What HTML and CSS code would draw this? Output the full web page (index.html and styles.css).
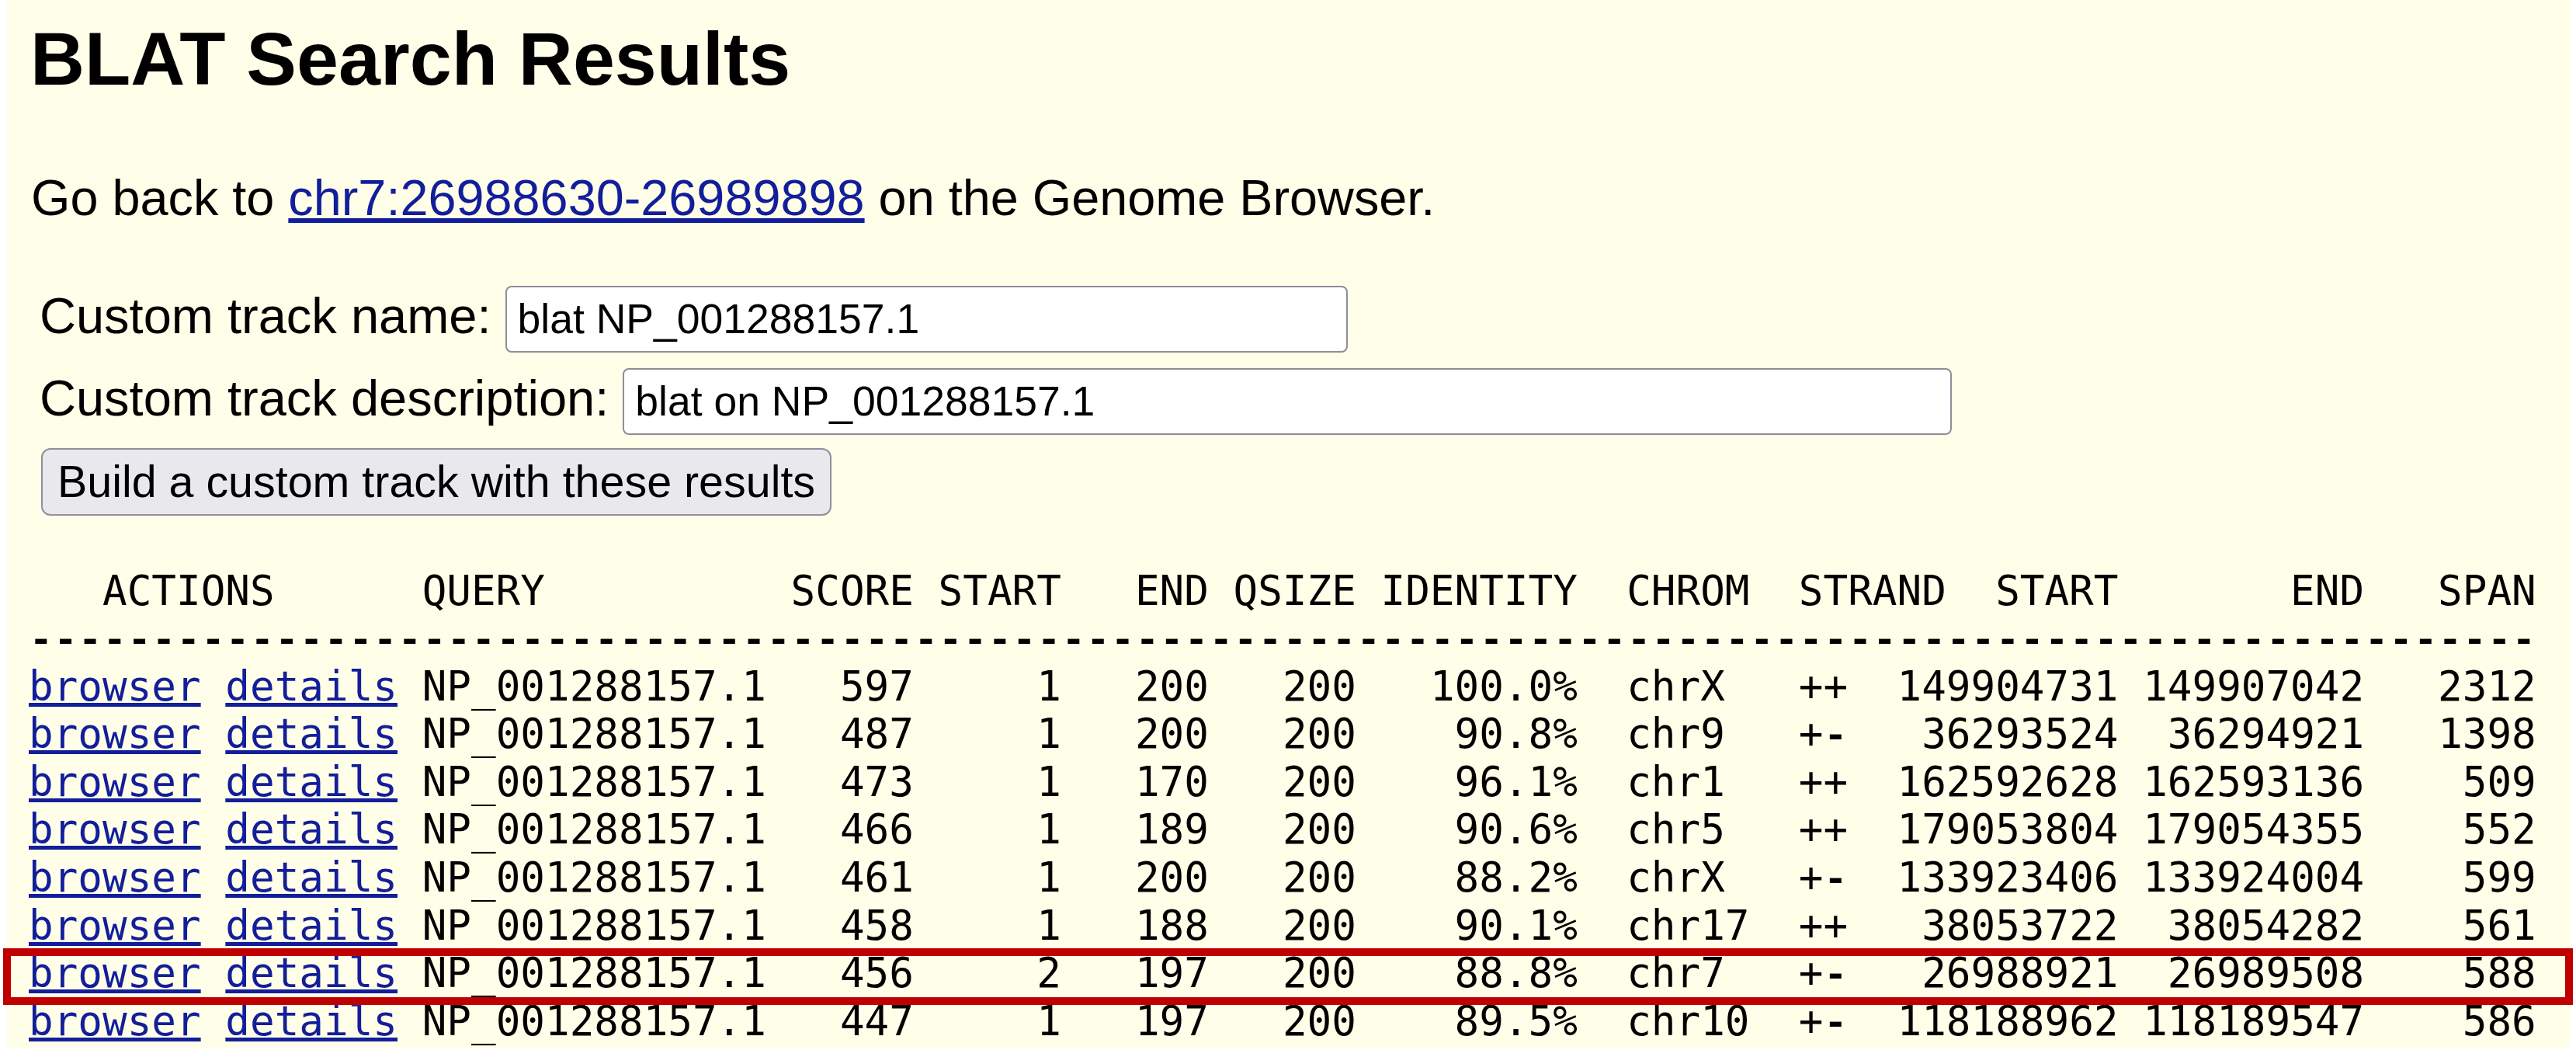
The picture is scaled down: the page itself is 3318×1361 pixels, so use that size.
FILE: index.html
```html
<!DOCTYPE html>
<html lang="en">
<head>
<meta charset="utf-8">
<title>BLAT Search Results</title>
<link rel="stylesheet" href="styles.css">
</head>
<body>
<div class="page">
  <h1 class="title">BLAT Search Results</h1>
  <p class="back">Go back to <a href="#">chr7:26988630-26989898</a> on the Genome Browser.</p>
  <form class="form">
    <div class="row">
      <label class="label">Custom track name:</label>
      <input class="field field-name" type="text" value="blat NP_001288157.1">
    </div>
    <div class="row row-desc">
      <label class="label">Custom track description:</label>
      <input class="field field-desc" type="text" value="blat on NP_001288157.1">
    </div>
    <button class="build" type="button">Build a custom track with these results</button>
  </form>
<pre class="results">   ACTIONS      QUERY          SCORE START   END QSIZE IDENTITY  CHROM  STRAND  START       END   SPAN
<span class="dash">------------------------------------------------------------------------------------------------------</span>
<a href="#">browser</a> <a href="#">details</a> NP_001288157.1   597     1   200   200   100.0%  chrX   ++  149904731 149907042   2312
<a href="#">browser</a> <a href="#">details</a> NP_001288157.1   487     1   200   200    90.8%  chr9   +<span class="dash">-</span>   36293524  36294921   1398
<a href="#">browser</a> <a href="#">details</a> NP_001288157.1   473     1   170   200    96.1%  chr1   ++  162592628 162593136    509
<a href="#">browser</a> <a href="#">details</a> NP_001288157.1   466     1   189   200    90.6%  chr5   ++  179053804 179054355    552
<a href="#">browser</a> <a href="#">details</a> NP_001288157.1   461     1   200   200    88.2%  chrX   +<span class="dash">-</span>  133923406 133924004    599
<a href="#">browser</a> <a href="#">details</a> NP_001288157.1   458     1   188   200    90.1%  chr17  ++   38053722  38054282    561
<a href="#">browser</a> <a href="#">details</a> NP_001288157.1   456     2   197   200    88.8%  chr7   +<span class="dash">-</span>   26988921  26989508    588
<a href="#">browser</a> <a href="#">details</a> NP_001288157.1   447     1   197   200    89.5%  chr10  +<span class="dash">-</span>  118188962 118189547    586
<a href="#">browser</a> <a href="#">details</a> NP_001288157.1   441     1   200   200    87.6%  chr3   +<span class="dash">-</span>  129411204 129411803    600
</pre>
</div>
<div class="highlight" aria-hidden="true"></div>
</body>
</html>
```

FILE: styles.css
```css
html {
  background: #ffffff;
}

body {
  margin: 0;
  position: relative;
  font-family: "Liberation Sans", Arial, sans-serif;
  color: #000000;
}

.page {
  background: #fffee8;
  margin: 0 8px 0 9px;
  height: 1350px;
  box-sizing: border-box;
  padding: 21px 0 0 28px;
}

.title {
  margin: 0;
  padding-left: 2px;
  font-size: 97px;
  font-weight: bold;
  line-height: 110px;
}

.back {
  margin: 87px 0 0;
  padding-left: 3px;
  font-size: 64.8px;
  line-height: 73.5px;
}

.back a {
  color: #121e9a;
}

.form {
  margin: 76px 0 0;
  padding-left: 14px;
  display: flex;
  flex-direction: column;
  align-items: flex-start;
}

.row {
  display: flex;
  align-items: baseline;
}

.row-desc {
  margin-top: 20px;
}

.label {
  font-size: 65px;
  line-height: 73.5px;
}

.field {
  box-sizing: border-box;
  height: 86px;
  margin: 0 0 0 18px;
  padding: 0 14px;
  font-family: "Liberation Sans", Arial, sans-serif;
  font-size: 53.5px;
  color: #000;
  background: #ffffff;
  border: 2px solid #8e8e99;
  border-radius: 8px;
  outline: none;
}

.field-name {
  width: 1085px;
}

.field-desc {
  width: 1712px;
}

.build {
  box-sizing: border-box;
  margin: 17px 0 0 2px;
  height: 87px;
  padding: 0 19px;
  font-family: "Liberation Sans", Arial, sans-serif;
  font-size: 57.4px;
  color: #000;
  background: #e9e9ed;
  border: 2px solid #8f8f9d;
  border-radius: 12px;
}

.results {
  margin: 66px 0 0;
  font-family: "DejaVu Sans Mono", Menlo, monospace;
  font-size: 52.6px;
  line-height: 61.6px;
  color: #000;
}

.results a {
  color: #121e9a;
}

.dash {
  font-family: "Liberation Mono", "Courier New", monospace;
  font-weight: bold;
  font-size: 52.77px;
  line-height: 0;
}

.highlight {
  position: absolute;
  left: 4px;
  top: 1221px;
  width: 3310px;
  height: 73px;
  box-sizing: border-box;
  border: 10px solid #c00000;
}
```
